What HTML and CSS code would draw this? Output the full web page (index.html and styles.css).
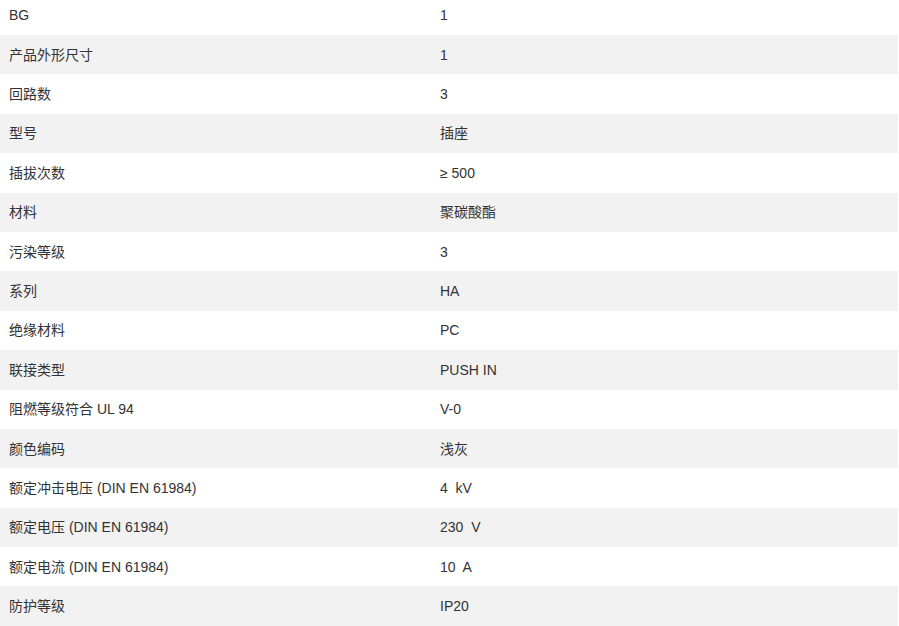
FILE: index.html
```html
<!DOCTYPE html>
<html lang="zh">
<head>
<meta charset="utf-8">
<title>产品参数</title>
<link rel="stylesheet" href="styles.css">
</head>
<body>
<div class="wrap">
<table class="spec">
<colgroup><col class="c1"><col class="c2"></colgroup>
<tbody>
<tr><td>BG</td><td>1</td></tr>
<tr><td>产品外形尺寸</td><td>1</td></tr>
<tr><td>回路数</td><td>3</td></tr>
<tr><td>型号</td><td>插座</td></tr>
<tr><td>插拔次数</td><td>≥ 500</td></tr>
<tr><td>材料</td><td>聚碳酸酯</td></tr>
<tr><td>污染等级</td><td>3</td></tr>
<tr><td>系列</td><td>HA</td></tr>
<tr><td>绝缘材料</td><td>PC</td></tr>
<tr><td>联接类型</td><td>PUSH IN</td></tr>
<tr><td>阻燃等级符合 UL 94</td><td>V-0</td></tr>
<tr><td>颜色编码</td><td>浅灰</td></tr>
<tr><td>额定冲击电压 (DIN EN 61984)</td><td>4&nbsp; kV</td></tr>
<tr><td>额定电压 (DIN EN 61984)</td><td>230&nbsp; V</td></tr>
<tr><td>额定电流 (DIN EN 61984)</td><td>10&nbsp; A</td></tr>
<tr><td>防护等级</td><td>IP20</td></tr>
</tbody>
</table>
</div>
</body>
</html>
```
FILE: styles.css
```css
html, body {
  margin: 0;
  padding: 0;
  background: #ffffff;
  overflow: hidden;
}
.wrap {
  margin-top: -4.4px;
  width: 898px;
}
.spec {
  width: 898px;
  border-collapse: collapse;
  table-layout: fixed;
  font-family: "Liberation Sans", "Noto Sans CJK SC", Arial, sans-serif;
  font-size: 14px;
  color: #333333;
}
.c1 { width: 431px; }
.spec td {
  height: 39.4px;
  padding: 0 9px;
  box-sizing: border-box;
  vertical-align: middle;
  line-height: 20px;
  white-space: nowrap;
}
.spec tr:nth-child(even) td {
  background: #f2f2f2;
}
```
